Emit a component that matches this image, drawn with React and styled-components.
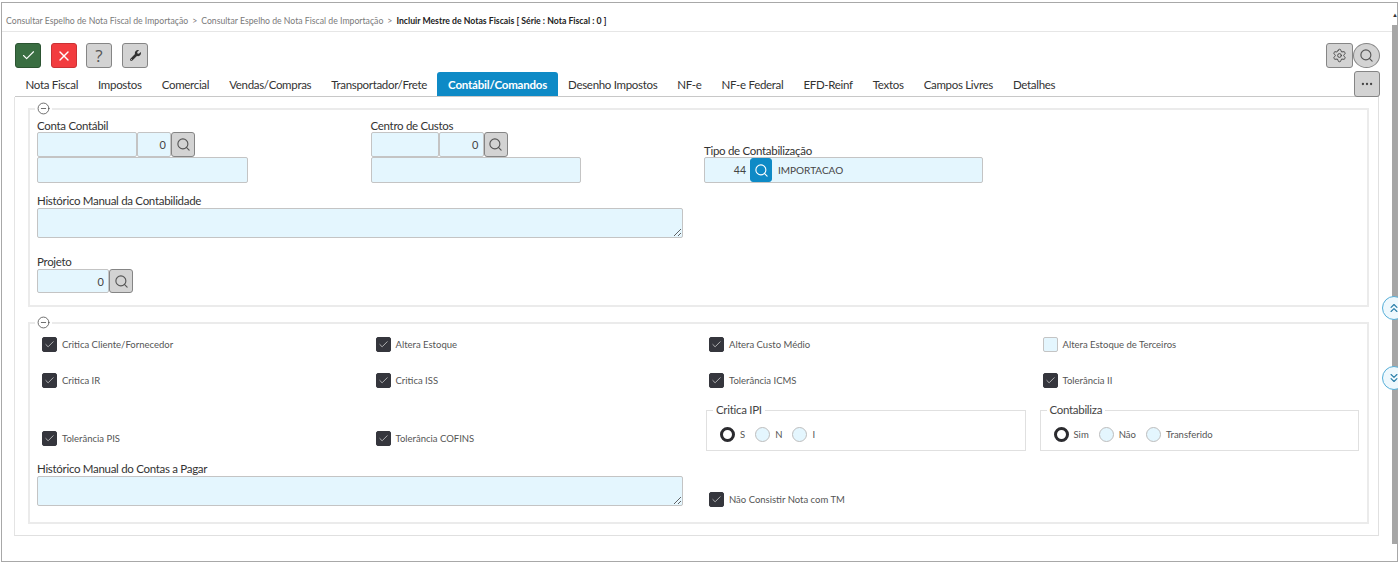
import React from 'react';
import styled, { createGlobalStyle } from 'styled-components';
import { Check, X, Search, Settings, Ellipsis, ChevronsUp, ChevronsDown, CircleMinus } from 'lucide-react';
import { FaWrench } from 'react-icons/fa';

const GlobalStyle = createGlobalStyle`
  html, body {
    margin: 0;
    padding: 0;
    height: 564px;
    overflow: hidden;
    background: #ffffff;
    font-family: "Lato", "Open Sans", sans-serif;
    color: #444;
  }
  * { box-sizing: border-box; }
`;

const Frame = styled.div`
  position: relative;
  margin: 2px 0 0 1px;
  width: 1397px;
  height: 560px;
  border: 1px solid #a8a8a8;
  display: flex;
`;

const Main = styled.div`
  flex: 1;
  min-width: 0;
  display: flex;
  flex-direction: column;
`;

const Breadcrumb = styled.div`
  height: 29px;
  flex: none;
  padding: 11px 0 0 4px;
  border-bottom: 1px solid #e6e6e6;
  font-size: 8.7px;
  line-height: 14px;
  color: #7a7a7a;
  display: flex;
  gap: 4px;
  b { color: #222; font-weight: 700; }
`;

const Toolbar = styled.div`
  flex: none;
  height: 40px;
  padding: 11px 12px 0 13px;
  display: flex;
  align-items: flex-start;
`;

const ToolButton = styled.button`
  width: ${(p) => p.$w || 26}px;
  height: ${(p) => p.$h || 25}px;
  margin-right: ${(p) => p.$gap || 0}px;
  padding: 0;
  display: flex;
  align-items: center;
  justify-content: center;
  font-family: "Open Sans", sans-serif;
  font-size: 17px;
  background: ${(p) => p.$bg || '#d3d3d3'};
  color: ${(p) => p.$fg || '#555'};
  border: 1px solid ${(p) => p.$line || '#858585'};
  border-radius: ${(p) => (p.$round ? '50%' : '3px')};
`;

const Spacer = styled.div`
  flex: 1;
`;

const TabRow = styled.div`
  flex: none;
  height: 25px;
  margin-left: 13px;
  margin-right: 13px;
  padding-left: 0.5px;
  display: flex;
  align-items: flex-start;
  border-bottom: 1px solid #c8c8c8;
  position: relative;
`;

const Tab = styled.div`
  height: 24px;
  padding: 0 ${(p) => (p.$active ? 11 : 10)}px;
  display: flex;
  align-items: center;
  font-size: 11.5px;
  letter-spacing: ${(p) => (p.$active ? -0.2 : -0.31)}px;
  white-space: nowrap;
  font-weight: ${(p) => (p.$active ? 700 : 400)};
  color: ${(p) => (p.$active ? '#fff' : '#333')};
  background: ${(p) => (p.$active ? '#0e8ac6' : 'transparent')};
  border-radius: 3px 3px 0 0;
`;

const MoreSlot = styled.div`
  position: absolute;
  right: -1px;
  top: -1px;
`;

const Panel = styled.div`
  flex: 1;
  margin: 0 13px 25px 12px;
  padding: 5px 9px 11px 13px;
  border-left: 1px solid #e4e4e4;
  border-right: 1px solid #e0e0e0;
  border-bottom: 1px solid #e0e0e0;
  display: flex;
  flex-direction: column;
  gap: 9px;
  min-height: 0;
`;

const Group = styled.fieldset`
  margin: 0;
  padding: 0 0 0 7px;
  border: 2px solid #ebebeb;
  height: ${(p) => p.$h}px;
  flex: none;
  min-width: 0;
`;

const GroupToggle = styled.legend`
  margin-left: -2px;
  padding: 0 2px;
  height: 13px;
  display: flex;
  align-items: center;
  color: #444;
`;

const TopGrid = styled.div`
  display: grid;
  grid-template-columns: 333.5px 333.5px 1fr;
  padding-top: 4px;
`;

const Field = styled.div`
  display: flex;
  flex-direction: column;
  align-self: ${(p) => (p.$end ? 'end' : 'start')};
  grid-column: ${(p) => p.$span || 'auto'};
  margin-top: ${(p) => p.$top || 0}px;
`;

const Label = styled.label`
  font-size: 11.5px;
  letter-spacing: -0.3px;
  line-height: 13px;
  height: 13px;
  color: #333;
  white-space: nowrap;
`;

const Row = styled.div`
  display: flex;
  margin-top: ${(p) => p.$top || 0}px;
`;

const Input = styled.input`
  width: ${(p) => p.$w}px;
  height: ${(p) => p.$h || 25}px;
  padding: 0 4px;
  background: #e4f6fe;
  border: 1px solid #c4c4c4;
  border-radius: 2px;
  font-family: "Lato", sans-serif;
  font-size: 11px;
  color: #444;
  outline: none;
  text-align: ${(p) => (p.$num ? 'right' : 'left')};
`;

const LookupBox = styled.div`
  width: ${(p) => p.$w}px;
  height: 26px;
  display: flex;
  align-items: center;
  background: #e4f6fe;
  border: 1px solid #c4c4c4;
  border-radius: 2px;
  font-size: 10.5px;
  color: #444;
`;

const LookupCode = styled.span`
  width: 41px;
  text-align: right;
  flex: none;
`;

const LookupText = styled.span`
  margin-left: 6px;
  font-size: 10px;
`;

const SearchBtn = styled.button`
  width: ${(p) => p.$w || 24}px;
  height: ${(p) => p.$h || 25}px;
  padding: 0;
  flex: none;
  display: flex;
  align-items: center;
  justify-content: center;
  border-radius: 3px;
  background: ${(p) => (p.$primary ? '#0e8ac6' : '#d3d3d3')};
  border: 1px solid ${(p) => (p.$primary ? '#0e8ac6' : '#858585')};
  color: ${(p) => (p.$primary ? '#fff' : '#555')};
  margin-left: ${(p) => p.$ml || 0}px;
`;

const Area = styled.textarea`
  display: block;
  width: 646px;
  height: 30px;
  margin: 1px 0 0;
  padding: 4px;
  background: #e4f6fe;
  border: 1px solid #c4c4c4;
  border-radius: 2px;
  font-family: "Lato", sans-serif;
  outline: none;
`;

const FlagGrid = styled.div`
  display: grid;
  grid-template-columns: 333.5px 333.5px 333.5px 1fr;
  grid-template-rows: 36px 36px 61px 62px;
`;

const FlagCell = styled.div`
  padding-left: 5px;
  padding-top: ${(p) => p.$pt || 0}px;
  display: flex;
  align-items: flex-start;
  gap: 5px;
  font-size: 9.5px;
  line-height: 15px;
  color: #555;
  grid-column: ${(p) => p.$col || 'auto'};
  grid-row: ${(p) => p.$row || 'auto'};
`;

const Box = styled.span`
  width: 15px;
  height: 15px;
  flex: none;
  border-radius: 2px;
  display: flex;
  align-items: center;
  justify-content: center;
  color: #e8e8e8;
  background: ${(p) => (p.$on ? '#35363d' : '#e4f6fe')};
  border: 1px solid ${(p) => (p.$on ? '#35363d' : '#c4c4c4')};
`;

const RadioGroup = styled.fieldset`
  margin: 2px 0 0 ${(p) => p.$ml}px;
  padding: 0 0 0 13px;
  width: ${(p) => p.$w}px;
  height: 48px;
  border: 1px solid #e0e0e0;
  align-self: start;
  min-width: 0;
  display: flex;
  align-items: flex-start;
  grid-column: ${(p) => p.$col};
  grid-row: 3;
`;

const RadioLegend = styled.legend`
  margin-left: -7px;
  padding: 0 3px;
  font-size: 11.5px;
  letter-spacing: -0.3px;
  line-height: 14px;
  color: #444;
`;

const RadioList = styled.div`
  display: flex;
  align-items: center;
  padding-top: 10px;
  font-size: 9.5px;
  color: #555;
`;

const RadioDot = styled.span`
  width: 15px;
  height: 15px;
  flex: none;
  border-radius: 50%;
  margin-right: 5px;
  background: ${(p) => (p.$on ? '#fff' : '#e4f6fe')};
  border: ${(p) => (p.$on ? '3.5px solid #2b2b2f' : '1px solid #bdbdbd')};
`;

const RadioText = styled.span`
  margin-right: ${(p) => p.$gap}px;
`;

const Scrollbar = styled.div`
  width: 5px;
  flex: none;
  display: flex;
  flex-direction: column;
`;

const ScrollArrow = styled.div`
  height: 22px;
  font-size: 6px;
  line-height: 24px;
  text-align: center;
  color: #333;
`;

const ScrollThumb = styled.div`
  height: 519px;
  background: #a6a6a6;
`;

const SideJump = styled.div`
  position: absolute;
  left: 1380px;
  top: ${(p) => p.$top}px;
  width: 24px;
  height: 24px;
  border-radius: 50%;
  border: 1px solid #55aed8;
  background: #eef8fd;
  color: #2a7ea8;
  display: flex;
  align-items: center;
  justify-content: center;
  clip-path: inset(-1px 8px -1px -1px);
`;

const tabs = [
  'Nota Fiscal', 'Impostos', 'Comercial', 'Vendas/Compras', 'Transportador/Frete', 'Contábil/Comandos',
  'Desenho Impostos', 'NF-e', 'NF-e Federal', 'EFD-Reinf', 'Textos', 'Campos Livres', 'Detalhes',
];

const Flag = ({ label, on = true, ...rest }) => (
  <FlagCell {...rest}>
    <Box $on={on}>{on && <Check size={11} strokeWidth={1.5} />}</Box>
    <span>{label}</span>
  </FlagCell>
);

const Lens = ({ size = 15 }) => <Search size={size} strokeWidth={1.8} />;

const Toggle = () => (
  <GroupToggle>
    <CircleMinus size={13} strokeWidth={1.4} />
  </GroupToggle>
);

const App = () => (
  <>
    <GlobalStyle />
    <Frame>
      <Main>
        <Breadcrumb>
          <span>Consultar Espelho de Nota Fiscal de Importação</span>
          <span>&gt;</span>
          <span>Consultar Espelho de Nota Fiscal de Importação</span>
          <span>&gt;</span>
          <b>Incluir Mestre de Notas Fiscais [ Série : Nota Fiscal : 0 ]</b>
        </Breadcrumb>
        <Toolbar>
          <ToolButton $bg="#3a6e42" $line="#2c5432" $fg="#fff" $gap={10}><Check size={15} strokeWidth={1.8} /></ToolButton>
          <ToolButton $bg="#f23c3f" $line="#c93235" $fg="#fff" $gap={9}><X size={16} strokeWidth={2} /></ToolButton>
          <ToolButton $gap={10}>?</ToolButton>
          <ToolButton $fg="#333"><FaWrench size={11} /></ToolButton>
          <Spacer />
          <ToolButton $fg="#444" $w={27}><Settings size={15} strokeWidth={1.5} /></ToolButton>
          <ToolButton $round $w={27}><Lens size={15} /></ToolButton>
        </Toolbar>
        <TabRow>
          {tabs.map((t) => (
            <Tab key={t} $active={t === 'Contábil/Comandos'}>{t}</Tab>
          ))}
          <MoreSlot>
            <ToolButton $fg="#444" $h={26}><Ellipsis size={14} strokeWidth={2} /></ToolButton>
          </MoreSlot>
        </TabRow>
        <Panel>
          <Group $h={205}>
            <Toggle />
            <TopGrid>
              <Field>
                <Label>Conta Contábil</Label>
                <Row>
                  <Input $w={100} readOnly />
                  <Input $w={34} $num readOnly value="0" />
                  <SearchBtn><Lens /></SearchBtn>
                </Row>
                <Input $w={211} $h={26} readOnly />
              </Field>
              <Field>
                <Label>Centro de Custos</Label>
                <Row>
                  <Input $w={68} readOnly />
                  <Input $w={45} $num readOnly value="0" />
                  <SearchBtn><Lens /></SearchBtn>
                </Row>
                <Input $w={210} $h={26} readOnly />
              </Field>
              <Field $end>
                <Label>Tipo de Contabilização</Label>
                <LookupBox $w={279}>
                  <LookupCode>44</LookupCode>
                  <SearchBtn $primary $w={22} $h={24} $ml={4}><Lens /></SearchBtn>
                  <LookupText>IMPORTACAO</LookupText>
                </LookupBox>
              </Field>
              <Field $span="1 / -1" $top={11}>
                <Label>Histórico Manual da Contabilidade</Label>
                <Area readOnly />
              </Field>
              <Field $span="1 / -1" $top={17}>
                <Label>Projeto</Label>
                <Row $top={1}>
                  <Input $w={72} $h={24} $num readOnly value="0" />
                  <SearchBtn $h={24}><Lens /></SearchBtn>
                </Row>
              </Field>
            </TopGrid>
          </Group>
          <Group $h={208}>
            <Toggle />
            <FlagGrid>
              <Flag label="Critica Cliente/Fornecedor" $pt={8} />
              <Flag label="Altera Estoque" $pt={8} />
              <Flag label="Altera Custo Médio" $pt={8} />
              <Flag label="Altera Estoque de Terceiros" $pt={8} on={false} />
              <Flag label="Critica IR" $pt={8} />
              <Flag label="Critica ISS" $pt={8} />
              <Flag label="Tolerância ICMS" $pt={8} />
              <Flag label="Tolerância II" $pt={8} />
              <Flag label="Tolerância PIS" $pt={30} $row={3} $col={1} />
              <Flag label="Tolerância COFINS" $pt={30} $row={3} $col={2} />
              <RadioGroup $col={3} $ml={2} $w={320}>
                <RadioLegend>Critica IPI</RadioLegend>
                <RadioList>
                  <RadioDot $on /><RadioText $gap={10}>S</RadioText>
                  <RadioDot /><RadioText $gap={10}>N</RadioText>
                  <RadioDot /><RadioText $gap={0}>I</RadioText>
                </RadioList>
              </RadioGroup>
              <RadioGroup $col={4} $ml={2} $w={319}>
                <RadioLegend>Contabiliza</RadioLegend>
                <RadioList>
                  <RadioDot $on /><RadioText $gap={10}>Sim</RadioText>
                  <RadioDot /><RadioText $gap={10}>Não</RadioText>
                  <RadioDot /><RadioText $gap={0}>Transferido</RadioText>
                </RadioList>
              </RadioGroup>
              <Field $span="1 / span 2">
                <Label>Histórico Manual do Contas a Pagar</Label>
                <Area readOnly />
              </Field>
              <Flag label="Não Consistir Nota com TM" $pt={30} $row={4} $col={3} />
            </FlagGrid>
          </Group>
        </Panel>
      </Main>
      <Scrollbar>
        <ScrollArrow>▲</ScrollArrow>
        <ScrollThumb />
      </Scrollbar>
      <SideJump $top={293}><ChevronsUp size={14} /></SideJump>
      <SideJump $top={363}><ChevronsDown size={14} /></SideJump>
    </Frame>
  </>
);

export default App;
